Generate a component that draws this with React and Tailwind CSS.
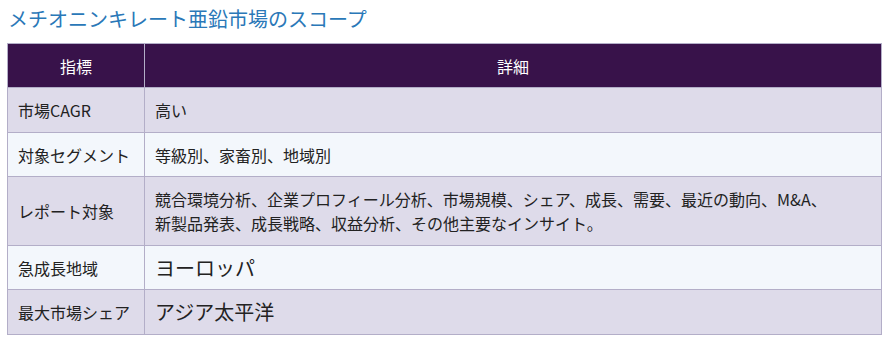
const rows = [
  { k: '市場CAGR', v: '高い' },
  { k: '対象セグメント', v: '等級別、家畜別、地域別' },
  {
    k: 'レポート対象',
    v: (
      <>
        競合環境分析、企業プロフィール分析、市場規模、シェア、成長、需要、最近の動向、M&A、
        <br />
        新製品発表、成長戦略、収益分析、その他主要なインサイト。
      </>
    ),
  },
  { k: '急成長地域', v: 'ヨーロッパ', big: true },
  { k: '最大市場シェア', v: 'アジア太平洋', big: true },
];

export default function App() {
  return (
    <div
      className="bg-white w-[891px] h-[339px] pl-[7px] pt-[4px]"
      style={{ fontFamily: '"Noto Sans CJK JP", "Noto Sans", sans-serif' }}
    >
      <h2 className="text-[20px] leading-[30px] text-[#2a78b8] pl-[1px] mb-[9px]">
        メチオニンキレート亜鉛市場のスコープ
      </h2>
      <table className="w-[875px] border-collapse text-[16px] text-[#222]">
        <thead>
          <tr className="bg-[#38124a] text-white h-[44px]">
            <th className="w-[137px] border border-[#b3aec8] font-normal">指標</th>
            <th className="border border-[#b3aec8] font-normal">詳細</th>
          </tr>
        </thead>
        <tbody>
          {rows.map((r, i) => (
            <tr key={i} className={i % 2 === 0 ? 'bg-[#dedbea]' : 'bg-[#f3f7fc]'}>
              <td className="border border-[#b3aec8] px-[10px] pt-[10px] pb-[9.5px] leading-[24px] align-middle whitespace-nowrap">
                {r.k}
              </td>
              <td
                className={
                  'border border-[#b3aec8] px-[10px] pt-[10px] pb-[9.5px] align-middle leading-[24px] ' +
                  (r.big ? 'text-[20px]' : '')
                }
              >
                {r.v}
              </td>
            </tr>
          ))}
        </tbody>
      </table>
    </div>
  );
}
